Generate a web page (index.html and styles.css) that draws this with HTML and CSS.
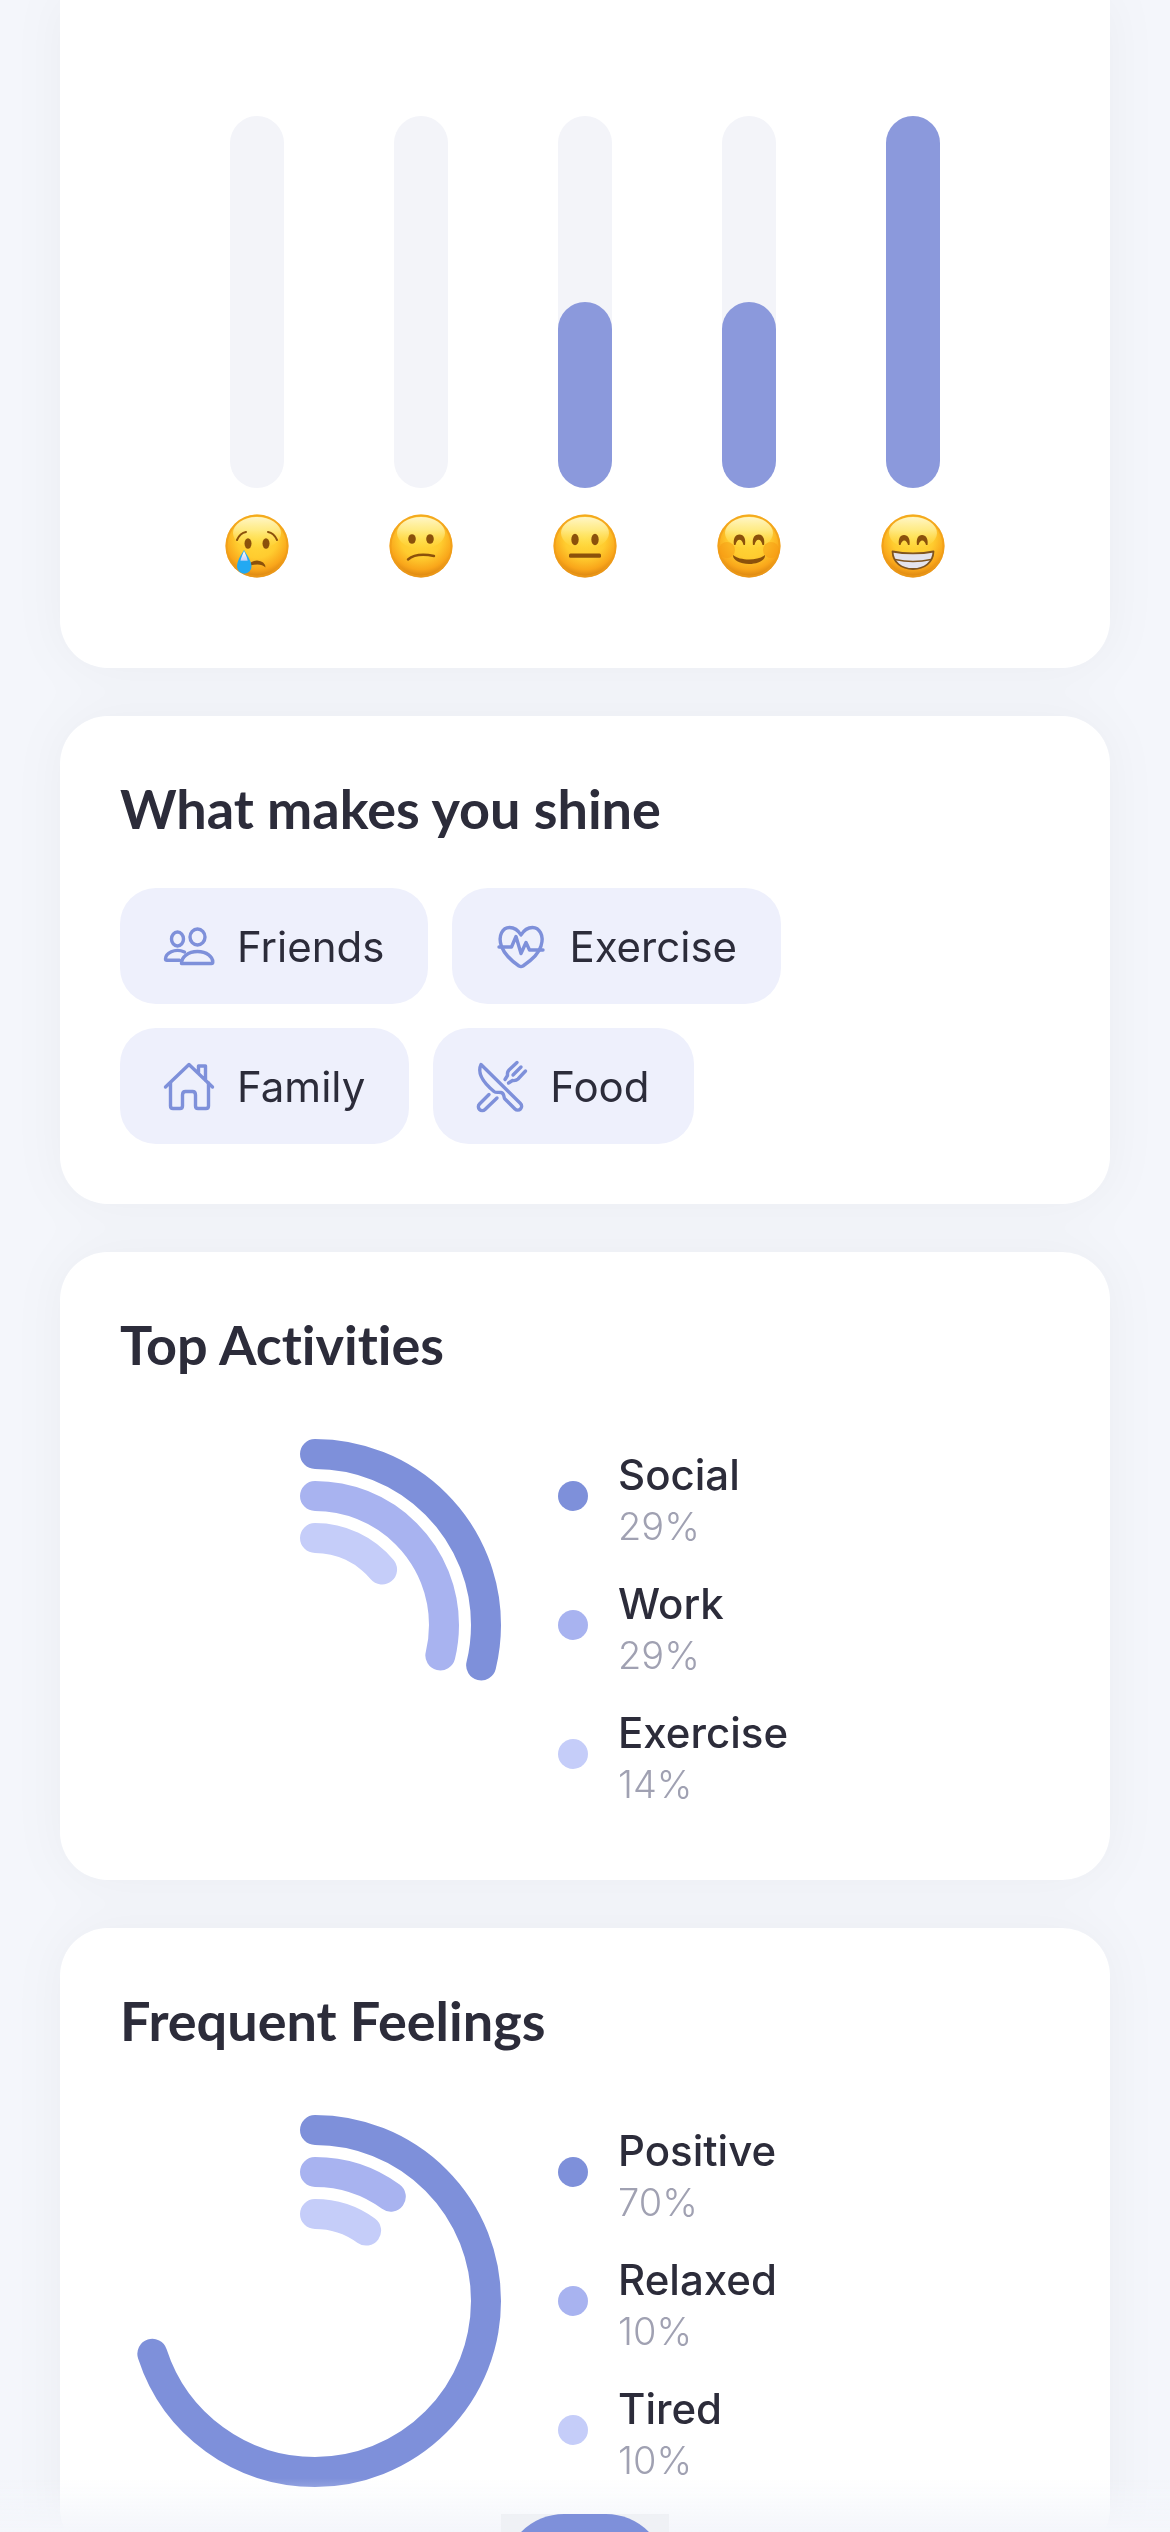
FILE: index.html
```
<!DOCTYPE html>
<html lang="en">

<head>
    <meta charset="UTF-8">
    <meta name="viewport" content="width=device-width, initial-scale=1">
    <title>Mood Statistics</title>
    <link rel="stylesheet" href="styles.css">
</head>

<body>
    <!-- shared gradients for the faces -->
    <svg class="defs" width="0" height="0" aria-hidden="true">
        <defs>
            <radialGradient id="face" cx="0.5" cy="0.36" r="0.66">
                <stop offset="0" stop-color="#ffd93c" />
                <stop offset="0.5" stop-color="#ffcc2f" />
                <stop offset="0.78" stop-color="#f9a61a" />
                <stop offset="1" stop-color="#d07a10" />
            </radialGradient>
            <linearGradient id="shine" x1="0" y1="0" x2="0" y2="1">
                <stop offset="0" stop-color="#fffbd8" stop-opacity="0.9" />
                <stop offset="0.4" stop-color="#fff6a8" stop-opacity="0.7" />
                <stop offset="1" stop-color="#ffe750" stop-opacity="0" />
            </linearGradient>
            <linearGradient id="tear" x1="0" y1="0" x2="0" y2="1">
                <stop offset="0" stop-color="#ffffff" />
                <stop offset="0.6" stop-color="#c8d0fa" />
                <stop offset="0.7" stop-color="#23a9f2" />
            </linearGradient>
            <g id="head">
                <circle cx="32" cy="32" r="31.500" fill="url(#face)" />
                <circle cx="32" cy="32" r="30.500" fill="none" stroke="#f09c18" stroke-width="2" opacity="0.7" />
                <ellipse cx="32" cy="19" rx="24" ry="16" fill="url(#shine)" />
            </g>
        </defs>
    </svg>

    <main class="container">
        <section class="card mood-card">
            <div class="mood">
                <div class="bar"></div>
                <svg class="emoji" viewBox="0 0 64 64" role="img" aria-label="Crying">
                    <use href="#head" />
                    <g fill="none" stroke="#8b510b" stroke-width="2" stroke-linecap="round">
                        <path d="M12 26q3-7 9-8M52 26q-3-7-9-8" />
                    </g>
                    <g fill="#8b510b">
                        <ellipse cx="23" cy="29.500" rx="3.500" ry="5.200" />
                        <ellipse cx="41" cy="29.500" rx="3.500" ry="5.200" />
                        <path d="M24 52q1-5 8-5.500q8 .5 8.500 7q-3-3-8-3q-5 0-8.500 1.500z" />
                    </g>
                    <path d="M19 36c3 5 7.500 11 7.500 16.500a7.200 7.200 0 0 1-14.500 0c0-5.500 4-11.500 7-16.500z" fill="#23a9f2" />
                    <path d="M19 37c2 4 4.500 9 4 15h-8c-.5-5 2-10 4-15z" fill="url(#tear)" />
                </svg>
            </div>
            <div class="mood">
                <div class="bar"></div>
                <svg class="emoji" viewBox="0 0 64 64" role="img" aria-label="Confused">
                    <use href="#head" />
                    <g fill="#8b510b">
                        <ellipse cx="23" cy="25" rx="3.800" ry="4.800" />
                        <ellipse cx="41" cy="25" rx="3.800" ry="4.800" />
                    </g>
                    <path d="M19 45.500c7-6 16-5.500 26-3.500" fill="none" stroke="#8b510b" stroke-width="2.400" stroke-linecap="round" />
                </svg>
            </div>
            <div class="mood">
                <div class="bar">
                    <div class="bar-fill" style="height: 50%"></div>
                </div>
                <svg class="emoji" viewBox="0 0 64 64" role="img" aria-label="Neutral">
                    <use href="#head" />
                    <g fill="#8b510b">
                        <ellipse cx="22" cy="25.500" rx="3.700" ry="5.700" />
                        <ellipse cx="42" cy="25.500" rx="3.700" ry="5.700" />
                        <rect x="16" y="39.500" width="32" height="4.200" rx="1.500" />
                    </g>
                </svg>
            </div>
            <div class="mood">
                <div class="bar">
                    <div class="bar-fill" style="height: 50%"></div>
                </div>
                <svg class="emoji" viewBox="0 0 64 64" role="img" aria-label="Smiling">
                    <use href="#head" />
                    <ellipse cx="10" cy="36" rx="8" ry="8" fill="#f59a12" opacity="0.5" />
                    <ellipse cx="54" cy="36" rx="8" ry="8" fill="#f59a12" opacity="0.5" />
                    <g fill="#8b510b">
                        <path d="M17 31c-1-6 1-10.500 5.500-10.500s6.500 4.500 5.500 10.500h-1.500c-1.500-7-6.500-7-8 0z" />
                        <path d="M36 31c-1-6 1-10.500 5.500-10.500s6.500 4.500 5.500 10.500h-1.500c-1.500-7-6.500-7-8 0z" />
                        <path d="M16 41c7 6 25 6 32 0c.5 5-7 9-16 9s-16.500-4-16-9z" />
                    </g>
                </svg>
            </div>
            <div class="mood">
                <div class="bar">
                    <div class="bar-fill" style="height: 100%"></div>
                </div>
                <svg class="emoji" viewBox="0 0 64 64" role="img" aria-label="Grinning">
                    <use href="#head" />
                    <g fill="#8b510b">
                        <path d="M18 31c-1-6 1-10 5-10s6.500 4 5.500 10h-1.500c-1.500-6-6-6-7.500 0z" />
                        <path d="M36 31c-1-6 1-10 5-10s6.500 4 5.500 10h-1.500c-1.500-6-6-6-7.500 0z" />
                    </g>
                    <path d="M11.500 37.500c12 2.500 29 2.500 41 0c-.5 11-9 17.500-20.500 17.500s-20-6.500-20.500-17.500z" fill="#e3e3ec" stroke="#80551f" stroke-width="1.800" stroke-linejoin="round" />
                    <path d="M14 45.500c11 2.500 25 2.500 36 0" fill="none" stroke="#80551f" stroke-width="1.600" />
                </svg>
            </div>
        </section>

        <section class="card">
            <h2>What makes you shine</h2>
            <ul class="chips">
                <li class="chip">
                    <svg class="icon" viewBox="0 0 50 50" aria-hidden="true">
                        <ellipse cx="33.500" cy="16" rx="7.500" ry="8" />
                        <ellipse cx="13.500" cy="18" rx="6" ry="7" />
                        <path d="M17.500 42.500c0-6.500 6.500-12 16-12s15.300 5.500 15.300 10.500q0 1.500-1.500 1.500z" />
                        <path d="M20.500 31c-10-4.500-19 1.500-19 7q0 1.300 1.500 1.300h12.500" />
                    </svg>
                    Friends
                </li>
                <li class="chip">
                    <svg class="icon" viewBox="0 0 50 50" aria-hidden="true">
                        <path d="M5.500 25.500C1.500 14 7 6.500 13.500 6.500c5 0 8.500 2.500 11.500 7.500c3-5 6.500-7.500 11.500-7.500c6.500 0 12 7.500 8.500 18.500C43 33 35 39.500 27 45q-2 1-4 0C15 39.500 8.500 33 5.500 25.500z" />
                        <path d="M3 26h12.500l4.500-10.500 5 17 5-11 3.500 7.500h13.500" />
                    </svg>
                    Exercise
                </li>
                <li class="chip">
                    <svg class="icon" viewBox="0 0 50 50" aria-hidden="true">
                        <path d="M1.500 26 25 3.500 48.500 26M34.500 12.500v-7.500h7v14.500" />
                        <path d="M6.500 22v23q0 2.500 2.500 2.500h7q2.500 0 2.500-2.500V34q0-3.500 3-3.500h7q3 0 3 3.500v11q0 2.500 2.500 2.500h8q2.500 0 2.500-2.500V22" />
                    </svg>
                    Family
                </li>
                <li class="chip">
                    <svg class="icon" viewBox="0 0 50 50" aria-hidden="true">
                        <path d="M4 3.500 43.500 42.500a3.800 3.800 0 0 1-5.500 5.500L27.500 37.500c-1-3-.5-5.500-3.500-6s-5 .5-7-1C8 23-.5 13 4 3.500z" />
                        <path d="M12 33.500 2.500 43a3.800 3.800 0 0 0 5.500 5.500L20 37" />
                        <path d="M40 1.500 32 9q-2 2-1.500 5.500l-2.500 4M48.500 10 41 18q-2 2-5.500 1.500L31.500 22M44 6l-8 8" />
                    </svg>
                    Food
                </li>
            </ul>
        </section>

        <section class="card">
            <h2>Top Activities</h2>
            <div class="chart-row">
                <svg class="rings" viewBox="0 0 372 372" aria-hidden="true">
                    <circle class="ring strong" cx="186" cy="186" r="171" pathLength="100" stroke-dasharray="28.800 100" />
                    <circle class="ring medium" cx="186" cy="186" r="129" pathLength="100" stroke-dasharray="28.800 100" />
                    <circle class="ring light" cx="186" cy="186" r="87" pathLength="100" stroke-dasharray="14 100" />
                </svg>
                <dl class="legend">
                    <div class="entry strong">
                        <dt>Social</dt>
                        <dd>29%</dd>
                    </div>
                    <div class="entry medium">
                        <dt>Work</dt>
                        <dd>29%</dd>
                    </div>
                    <div class="entry light">
                        <dt>Exercise</dt>
                        <dd>14%</dd>
                    </div>
                </dl>
            </div>
        </section>

        <section class="card">
            <h2>Frequent Feelings</h2>
            <div class="chart-row">
                <svg class="rings" viewBox="0 0 372 372" aria-hidden="true">
                    <circle class="ring strong" cx="186" cy="186" r="171" pathLength="100" stroke-dasharray="70 100" />
                    <circle class="ring medium" cx="186" cy="186" r="129" pathLength="100" stroke-dasharray="10 100" />
                    <circle class="ring light" cx="186" cy="186" r="87" pathLength="100" stroke-dasharray="10 100" />
                </svg>
                <dl class="legend">
                    <div class="entry strong">
                        <dt>Positive</dt>
                        <dd>70%</dd>
                    </div>
                    <div class="entry medium">
                        <dt>Relaxed</dt>
                        <dd>10%</dd>
                    </div>
                    <div class="entry light">
                        <dt>Tired</dt>
                        <dd>10%</dd>
                    </div>
                </dl>
            </div>
        </section>
    </main>

    <nav class="bottom-bar">
        <div class="add-wrap">
            <button type="button" class="add" aria-label="Add entry"></button>
        </div>
    </nav>
</body>

</html>
```
FILE: styles.css
```
:root {
    --strong: #7e90da;
    --medium: #a8b3f0;
    --light: #c5cdf9;
    --text: #2c2c3a;
}

* {
    box-sizing: border-box;
}

body {
    margin: 0;
    height: 100vh;
    overflow: hidden;
    background-color: #f4f6fb;
    color: var(--text);
    font-family: Inter, "Open Sans", sans-serif;
}

.defs {
    position: absolute;
}

.container {
    display: flex;
    flex-direction: column;
    gap: 48px;
    padding: 0 60px;
    /* one shadow for the whole stack so it never falls on a card */
    filter: drop-shadow(0 0 24px rgba(0, 0, 0, 0.04));
}

.card {
    padding: 60px;
    background-color: #fff;
    border-radius: 48px;
}

h2 {
    margin: 0 0 46px;
    font-family: Lato, sans-serif;
    font-size: 54px;
    font-weight: 700;
    font-variant-ligatures: none;
    line-height: 66px;
}

/* mood bars */
.mood-card {
    display: flex;
    justify-content: center;
    gap: 100px;
    padding: 116px 60px 90px;
    border-radius: 0 0 48px 48px;
}

.mood {
    display: flex;
    flex-direction: column;
    align-items: center;
    gap: 26px;
    width: 64px;
}

.bar {
    display: flex;
    align-items: flex-end;
    width: 54px;
    height: 372px;
    background-color: #f3f4f9;
    border-radius: 27px;
}

.bar-fill {
    width: 100%;
    background-color: #8b99dc;
    border-radius: 27px;
}

.emoji {
    display: block;
    width: 64px;
    height: 64px;
}

/* chips */
.chips {
    display: flex;
    flex-wrap: wrap;
    gap: 24px;
    margin: 0;
    padding: 0;
    list-style: none;
}

.chip {
    display: flex;
    align-items: center;
    gap: 23px;
    height: 116px;
    padding: 0 44px;
    background-color: #eef0fc;
    border-radius: 36px;
    font-size: 42px;
}

.icon {
    width: 50px;
    height: 50px;
    overflow: visible;
    fill: none;
    stroke: var(--strong);
    stroke-width: 3.4;
    stroke-linecap: round;
    stroke-linejoin: round;
}

/* charts */
.chart-row {
    display: flex;
    align-items: center;
    gap: 57px;
    padding: 15px 9px 9px;
}

.rings {
    width: 372px;
    height: 372px;
    transform: rotate(-90deg);
}

.ring {
    fill: none;
    stroke: currentColor;
    stroke-width: 30;
    stroke-linecap: round;
}

.strong {
    color: var(--strong);
}

.medium {
    color: var(--medium);
}

.light {
    color: var(--light);
}

.legend {
    display: grid;
    gap: 26px;
    margin: 0;
}

.entry {
    display: grid;
    grid-template-columns: 30px auto;
    column-gap: 30px;
    align-items: center;
}

.entry::before {
    content: "";
    grid-row: 1 / 3;
    width: 30px;
    height: 30px;
    border-radius: 50%;
    background-color: currentColor;
}

.legend dt {
    color: var(--text);
    font-size: 42px;
    font-weight: 500;
    line-height: 59px;
}

.legend dd {
    margin: 0;
    color: #a0a1b2;
    font-size: 38px;
    font-weight: 300;
    line-height: 44px;
}

/* bottom bar, its button reaches below the fold */
.bottom-bar {
    position: fixed;
    right: 0;
    bottom: 0;
    left: 0;
    display: flex;
    justify-content: center;
    height: 54px;
    padding-top: 36px;
    overflow: hidden;
    background: linear-gradient(rgba(244, 246, 251, 0), #f4f6fb);
}

.add-wrap {
    width: 168px;
    height: 168px;
    background-color: #eff1f5;
    text-align: center;
}

.add {
    width: 162px;
    height: 162px;
    padding: 0;
    border: none;
    border-radius: 60px;
    background-color: var(--strong);
    cursor: pointer;
}
```
